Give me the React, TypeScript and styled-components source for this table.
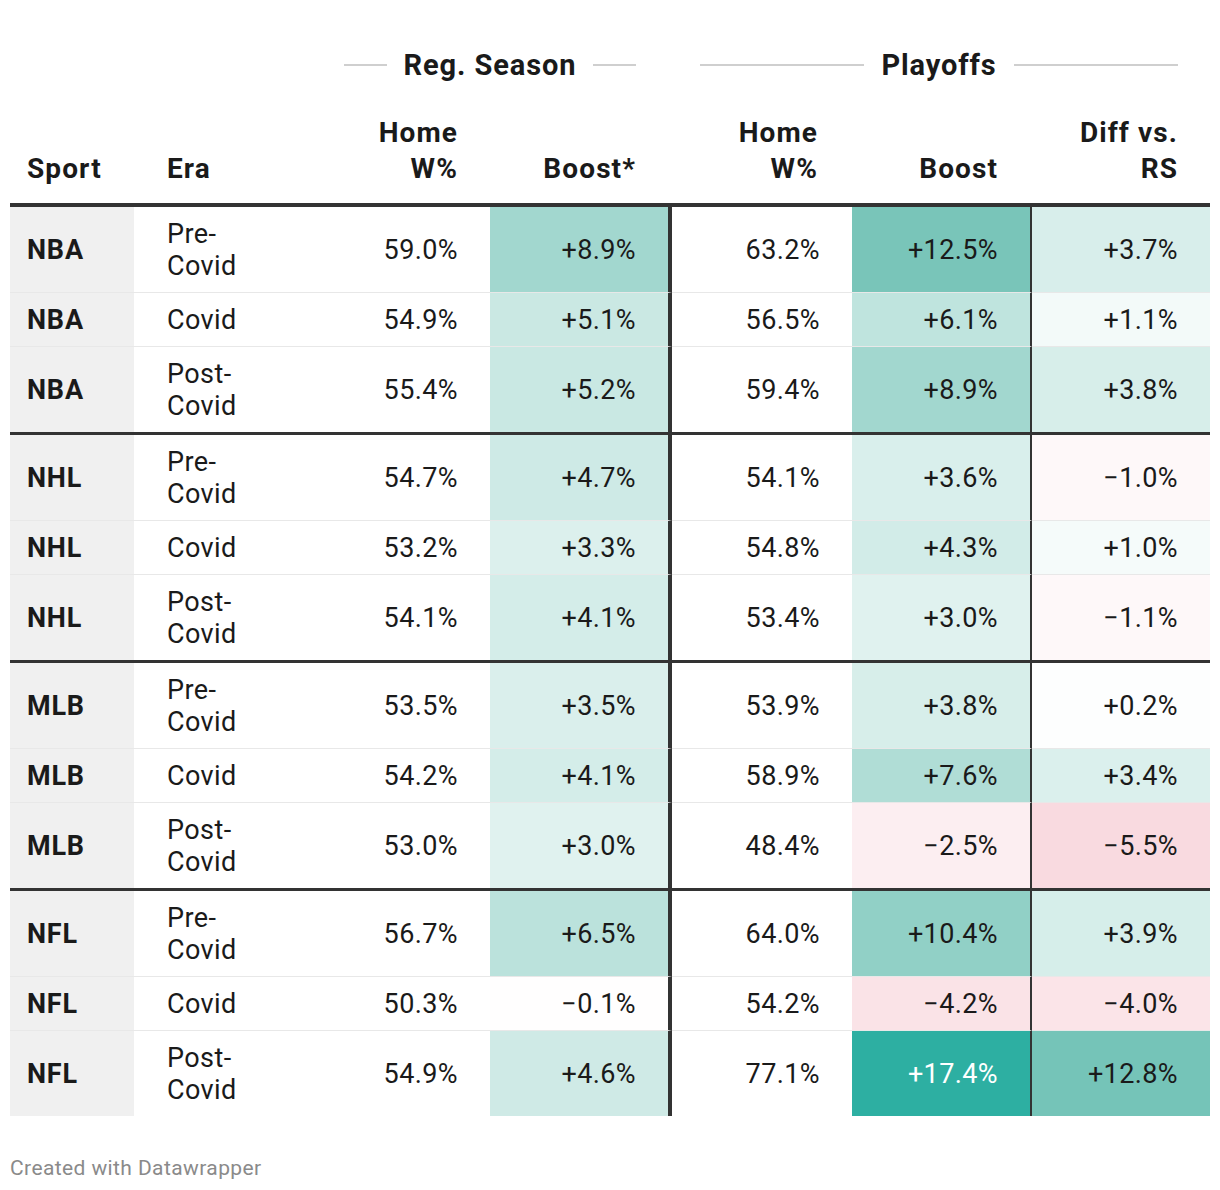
import styled, { createGlobalStyle } from "styled-components";

type Row = {
  sport: string;
  era: "Pre" | "Covid" | "Post";
  rsHome: number;
  rsBoost: number;
  poHome: number;
  poBoost: number;
  diff: number;
};

const rows: Row[] = [
  { sport: "NBA", era: "Pre", rsHome: 59.0, rsBoost: 8.9, poHome: 63.2, poBoost: 12.5, diff: 3.7 },
  { sport: "NBA", era: "Covid", rsHome: 54.9, rsBoost: 5.1, poHome: 56.5, poBoost: 6.1, diff: 1.1 },
  { sport: "NBA", era: "Post", rsHome: 55.4, rsBoost: 5.2, poHome: 59.4, poBoost: 8.9, diff: 3.8 },
  { sport: "NHL", era: "Pre", rsHome: 54.7, rsBoost: 4.7, poHome: 54.1, poBoost: 3.6, diff: -1.0 },
  { sport: "NHL", era: "Covid", rsHome: 53.2, rsBoost: 3.3, poHome: 54.8, poBoost: 4.3, diff: 1.0 },
  { sport: "NHL", era: "Post", rsHome: 54.1, rsBoost: 4.1, poHome: 53.4, poBoost: 3.0, diff: -1.1 },
  { sport: "MLB", era: "Pre", rsHome: 53.5, rsBoost: 3.5, poHome: 53.9, poBoost: 3.8, diff: 0.2 },
  { sport: "MLB", era: "Covid", rsHome: 54.2, rsBoost: 4.1, poHome: 58.9, poBoost: 7.6, diff: 3.4 },
  { sport: "MLB", era: "Post", rsHome: 53.0, rsBoost: 3.0, poHome: 48.4, poBoost: -2.5, diff: -5.5 },
  { sport: "NFL", era: "Pre", rsHome: 56.7, rsBoost: 6.5, poHome: 64.0, poBoost: 10.4, diff: 3.9 },
  { sport: "NFL", era: "Covid", rsHome: 50.3, rsBoost: -0.1, poHome: 54.2, poBoost: -4.2, diff: -4.0 },
  { sport: "NFL", era: "Post", rsHome: 54.9, rsBoost: 4.6, poHome: 77.1, poBoost: 17.4, diff: 12.8 },
];

const MAX = 17.4;

// white -> teal for gains, white -> pink for losses
const tealStops: [number, number[]][] = [
  [0, [255, 255, 255]],
  [0.5, [164, 216, 208]],
  [0.72, [121, 197, 185]],
  [1, [45, 175, 162]],
];

function heat(v: number) {
  const t = Math.min(Math.abs(v) / MAX, 1);
  let c: number[];
  if (v < 0) {
    c = [255 - t * 19, 255 - t * 117, 255 - t * 98];
  } else {
    let i = 0;
    while (i < tealStops.length - 2 && t > tealStops[i + 1][0]) i++;
    const [t0, a] = tealStops[i];
    const [t1, b] = tealStops[i + 1];
    const f = (t - t0) / (t1 - t0);
    c = a.map((x, k) => x + (b[k] - x) * f);
  }
  return {
    bg: `rgb(${c.map((x) => Math.round(x)).join(",")})`,
    light: v > 0 && t > 0.9,
  };
}

const pct = (v: number) => `${v.toFixed(1)}%`;
const signed = (v: number) =>
  `${v < 0 ? "\u2212" : "+"}${Math.abs(v).toFixed(1)}%`;

const GlobalStyle = createGlobalStyle`
  body {
    margin: 0;
    background: #fff;
    color: #1a1a1a;
    font-family: Roboto, "Liberation Sans", sans-serif;
  }
`;

const Wrapper = styled.div`
  width: 1200px;
  padding: 45px 10px 0;
`;

const Table = styled.table`
  width: 1200px;
  table-layout: fixed;
  border-collapse: separate;
  border-spacing: 0;
`;

const GroupCell = styled.th<{ $padL: number; $padR: number }>`
  height: 40px;
  padding: 0 ${(p) => p.$padR}px 0 ${(p) => p.$padL}px;
  font-size: 29px;
  font-weight: 700;
  letter-spacing: 0.9px;
  color: #1a1a1a;
`;

const GroupLabel = styled.div`
  display: flex;
  align-items: center;
  gap: 17px;
  white-space: nowrap;

  &::before,
  &::after {
    content: "";
    flex: 1;
    height: 2px;
    background: #cfcfcf;
  }
`;

const HeadCell = styled.th<{ $right?: boolean; $padL?: number; $padR?: number }>`
  vertical-align: bottom;
  padding: 30px ${(p) => p.$padR ?? 32}px 16px ${(p) => p.$padL ?? 0}px;
  font-size: 28px;
  line-height: 36px;
  font-weight: 700;
  letter-spacing: 1.1px;
  text-align: ${(p) => (p.$right ? "right" : "left")};
  border-bottom: 4px solid #333;
`;

const Tr = styled.tr<{ $groupEnd?: boolean; $last?: boolean }>`
  & > td {
    border-bottom: ${(p) =>
      p.$last ? "none" : p.$groupEnd ? "3px solid #333" : "1px solid #e8e8e8"};
  }
`;

const Cell = styled.td`
  height: 32px;
  padding: 10.5px 32px 10.5px 0;
  font-size: 27px;
  line-height: 32px;
  letter-spacing: 0.4px;
  vertical-align: middle;
`;

const SportCell = styled(Cell)`
  padding-left: 17px;
  background: #f0f0f0;
  font-weight: 700;
  letter-spacing: 0.8px;
`;

const EraCell = styled(Cell)`
  padding-left: 33px;
`;

const NumCell = styled(Cell)<{ $bg?: string; $light?: boolean; $rule?: number }>`
  text-align: right;
  background: ${(p) => p.$bg ?? "#fff"};
  color: ${(p) => (p.$light ? "#fff" : "#1a1a1a")};
  border-right: ${(p) => (p.$rule ? `${p.$rule}px solid #333` : "none")};
`;

const Footer = styled.div`
  margin-top: 40px;
  font-size: 21px;
  line-height: 24px;
  letter-spacing: 0.4px;
  color: #8a8a8a;
`;

function EraLabel({ era }: { era: Row["era"] }) {
  if (era === "Covid") return <>Covid</>;
  return (
    <>
      {era}-
      <br />
      Covid
    </>
  );
}

function HeatCell({ value, rule }: { value: number; rule?: number }) {
  const { bg, light } = heat(value);
  return (
    <NumCell $bg={bg} $light={light} $rule={rule}>
      {signed(value)}
    </NumCell>
  );
}

export default function App() {
  return (
    <>
      <GlobalStyle />
      <Wrapper>
        <Table>
          <colgroup>
            <col style={{ width: 124 }} />
            <col style={{ width: 178 }} />
            <col style={{ width: 178 }} />
            <col style={{ width: 182 }} />
            <col style={{ width: 180 }} />
            <col style={{ width: 180 }} />
            <col style={{ width: 178 }} />
          </colgroup>
          <thead>
            <tr>
              <th colSpan={2} />
              <GroupCell colSpan={2} $padL={32} $padR={36}>
                <GroupLabel>Reg. Season</GroupLabel>
              </GroupCell>
              <GroupCell colSpan={3} $padL={28} $padR={32}>
                <GroupLabel>Playoffs</GroupLabel>
              </GroupCell>
            </tr>
            <tr>
              <HeadCell $padL={17} $padR={0}>Sport</HeadCell>
              <HeadCell $padL={33} $padR={0}>Era</HeadCell>
              <HeadCell $right>
                Home
                <br />
                W%
              </HeadCell>
              <HeadCell $right $padR={36}>Boost*</HeadCell>
              <HeadCell $right $padR={34}>
                Home
                <br />
                W%
              </HeadCell>
              <HeadCell $right $padR={34}>Boost</HeadCell>
              <HeadCell $right>
                Diff vs.
                <br />
                RS
              </HeadCell>
            </tr>
          </thead>
          <tbody>
            {rows.map((r, i) => (
              <Tr
                key={i}
                $groupEnd={i % 3 === 2}
                $last={i === rows.length - 1}
              >
                <SportCell>{r.sport}</SportCell>
                <EraCell>
                  <EraLabel era={r.era} />
                </EraCell>
                <NumCell>{pct(r.rsHome)}</NumCell>
                <HeatCell value={r.rsBoost} rule={4} />
                <NumCell>{pct(r.poHome)}</NumCell>
                <HeatCell value={r.poBoost} rule={2} />
                <HeatCell value={r.diff} />
              </Tr>
            ))}
          </tbody>
        </Table>
        <Footer>Created with Datawrapper</Footer>
      </Wrapper>
    </>
  );
}
